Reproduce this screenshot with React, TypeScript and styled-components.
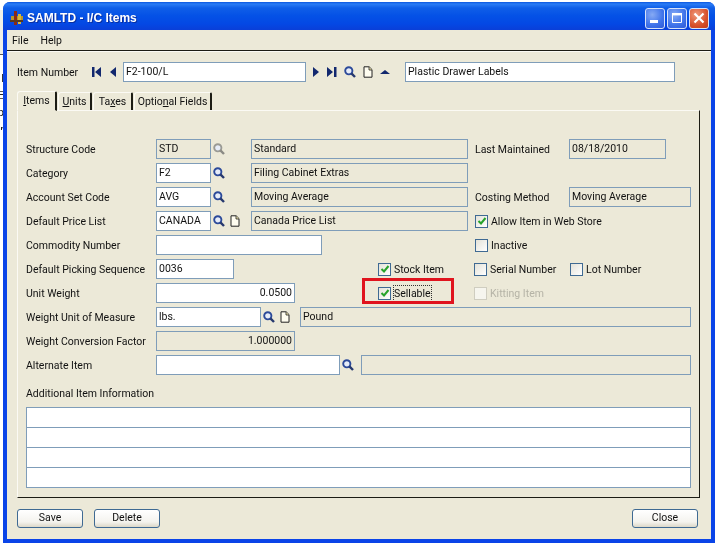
import React from "react";
import styled, { createGlobalStyle } from "styled-components";

const Global = createGlobalStyle`
  html, body { margin: 0; padding: 0; background: #fff; }
  body { width: 719px; height: 546px; overflow: hidden; font-family: Roboto, "Liberation Sans", Arial, sans-serif; font-size: 10.5px; color: #111; }
`;

const Desktop = styled.div`
  position: relative;
  width: 719px;
  height: 546px;
  overflow: hidden;
  filter: blur(0.35px);
`;

const Sliver = styled.div`
  position: absolute;
  left: 0;
  top: 10px;
  width: 3px;
  height: 120px;
  background: linear-gradient(#f0efe8 0 44px, #555 44px 45px, #fff 45px);
  overflow: hidden;
`;

const SliverText = styled.div`
  position: absolute;
  left: -5px;
  top: 60px;
  width: 9px;
  text-align: right;
  line-height: 17px;
  font-size: 11px;
  color: #222;
`;

const Window = styled.div`
  position: absolute;
  left: 3px;
  top: 2px;
  width: 712px;
  height: 541px;
  box-sizing: border-box;
  background: #0a44e8;
  border-radius: 7px 7px 0 0;
  padding: 0 4px 4px 4px;
  display: flex;
  flex-direction: column;
`;

const TitleBar = styled.div`
  height: 28px;
  box-sizing: border-box;
  margin: 0 -4px;
  padding: 4px 6px 0 7px;
  border-radius: 7px 7px 0 0;
  background: linear-gradient(#0a55e0 0, #2a7cf5 2px, #0f5ee8 6px, #0451e6 14px, #0448e4 22px, #0a3fd8 28px);
  display: flex;
  align-items: center;
  gap: 3px;
  color: #fff;
`;

const TitleText = styled.div`
  flex: 1;
  font-family: "Liberation Sans", Arial, sans-serif;
  font-size: 12px;
  font-weight: 700;
  text-shadow: 1px 1px 0 #0a2fa0;
`;

const CaptionGroup = styled.div`
  display: flex;
  gap: 2px;
`;

const CaptionButton = styled.div<{ $close?: boolean }>`
  width: 20px;
  height: 21px;
  box-sizing: border-box;
  border: 1px solid #d6e2fa;
  border-radius: 3px;
  background: ${(p) =>
    p.$close
      ? "radial-gradient(circle at 35% 30%, #f09a7c, #d8512c 60%, #c23a18)"
      : "radial-gradient(circle at 35% 30%, #86aaf4, #3f73ea 60%, #2f5ad6)"};
  display: flex;
  align-items: center;
  justify-content: center;
`;

const Body = styled.div`
  flex: 1;
  background: #ece9d8;
  display: flex;
  flex-direction: column;
`;

const MenuBar = styled.div`
  height: 20px;
  padding: 0 5px;
  display: flex;
  align-items: center;
  gap: 12px;
  border-bottom: 1px solid #1c1c14;
  box-shadow: 0 1px 0 #fbfaf4;
`;

const Content = styled.div`
  flex: 1;
  padding: 11px 11px 0 10px;
  display: flex;
  flex-direction: column;
`;

const HeaderRow = styled.div`
  height: 20px;
  display: flex;
  align-items: center;
`;

const HeaderLabel = styled.div`
  width: 75px;
  flex: none;
`;

const Field = styled.div<{ $w: number; $gray?: boolean; $right?: boolean; $ml?: number }>`
  width: ${(p) => p.$w}px;
  margin-left: ${(p) => p.$ml ?? 0}px;
  height: 20px;
  flex: none;
  box-sizing: border-box;
  border: 1px solid #7f9db9;
  padding: 0 2px;
  line-height: 18px;
  white-space: nowrap;
  overflow: hidden;
  background: ${(p) => (p.$gray ? "#ece9d8" : "#fff")};
  text-align: ${(p) => (p.$right ? "right" : "left")};
`;

const NavTray = styled.div<{ $w: number; $gap: number; $pad?: number }>`
  width: ${(p) => p.$w}px;
  flex: none;
  display: flex;
  align-items: center;
  gap: ${(p) => p.$gap}px;
  padding-left: ${(p) => p.$pad ?? 2}px;
  box-sizing: border-box;
`;

const TabStrip = styled.div`
  margin-top: 8px;
  height: 20px;
  display: flex;
  align-items: flex-end;
  gap: 1px;
  position: relative;
  z-index: 1;
`;

const Tab = styled.div<{ $w: number; $active?: boolean }>`
  width: ${(p) => p.$w}px;
  height: ${(p) => (p.$active ? 20 : 18)}px;
  box-sizing: border-box;
  text-align: center;
  white-space: nowrap;
  line-height: 17px;
  background: #ece9d8;
  border-top: 1px solid #fbfaf4;
  border-left: 1px solid #fbfaf4;
  border-right: 2px solid #1c1c14;
  border-radius: 3px 2px 0 0;
  border-bottom: ${(p) => (p.$active ? "1px solid #ece9d8" : "none")};
  margin-bottom: ${(p) => (p.$active ? -1 : 0)}px;
`;

const Panel = styled.div`
  height: 388px;
  width: 683px;
  box-sizing: border-box;
  border-top: 1px solid #fbfaf4;
  border-left: 1px solid #fbfaf4;
  border-right: 1px solid #1c1c14;
  border-bottom: 1px solid #1c1c14;
  padding: 28px 0 0 8px;
  display: flex;
  flex-direction: column;
  gap: 4px;
`;

const Row = styled.div`
  height: 20px;
  display: flex;
  align-items: center;
`;

const Label = styled.div<{ $w?: number; $ml?: number }>`
  width: ${(p) => p.$w ?? 130}px;
  margin-left: ${(p) => p.$ml ?? 0}px;
  flex: none;
  white-space: nowrap;
`;

const CheckWrap = styled.div<{ $w?: number; $ml?: number; $off?: boolean }>`
  width: ${(p) => (p.$w ? `${p.$w}px` : "auto")};
  margin-left: ${(p) => p.$ml ?? 0}px;
  flex: none;
  display: flex;
  align-items: center;
  gap: 3px;
  white-space: nowrap;
  position: relative;
  color: ${(p) => (p.$off ? "#b5b3a6" : "inherit")};
`;

const Box = styled.span<{ $off?: boolean }>`
  width: 13px;
  height: 13px;
  box-sizing: border-box;
  flex: none;
  border: 1.5px solid ${(p) => (p.$off ? "#cfcdc0" : "#3f6a93")};
  background: ${(p) => (p.$off ? "#f6f5ee" : "linear-gradient(135deg,#e4e2d8,#fff)")};
  display: inline-flex;
  align-items: center;
  justify-content: center;
`;

const FocusText = styled.span`
  outline: 1px dotted #333;
  outline-offset: 0;
  padding: 1px 0;
`;

const RedBox = styled.div`
  position: absolute;
  left: -16px;
  top: -8px;
  width: 92px;
  height: 26px;
  box-sizing: border-box;
  border: 3px solid #e0141e;
`;

const AdditionalLabel = styled.div`
  margin-top: 8px;
  height: 16px;
  line-height: 14px;
`;

const InfoTable = styled.div`
  width: 665px;
  height: 80px;
  margin-top: 1px;
  display: flex;
  flex-direction: column;
`;

const InfoRow = styled.div`
  flex: 1;
  box-sizing: border-box;
  background: #fff;
  border: 1px solid #7f9db9;
  margin-top: -1px;
`;

const Footer = styled.div`
  margin-top: 11px;
  display: flex;
  gap: 11px;
`;

const Btn = styled.div<{ $push?: boolean }>`
  width: 66px;
  height: 19px;
  box-sizing: border-box;
  margin-left: ${(p) => (p.$push ? "auto" : "0")};
  margin-right: ${(p) => (p.$push ? "2px" : "0")};
  border: 1.5px solid #3f6a93;
  border-radius: 3px;
  background: linear-gradient(#ffffff, #f4f3ee 70%, #dcd8c8);
  text-align: center;
  line-height: 16px;
`;

const Search = ({ gray }: { gray?: boolean }) => (
  <svg width="12" height="12" viewBox="0 0 12 12" style={{ flex: "none" }}>
    <circle cx="4.8" cy="4.8" r="3.6" fill="#e6ecf8" stroke={gray ? "#9a9a94" : "#2c4a9a"} strokeWidth="1.9" />
    <path d="M7.4 7.4 11 11" stroke={gray ? "#8a8a84" : "#26386e"} strokeWidth="2.4" />
  </svg>
);

const Doc = () => (
  <svg width="10" height="12" viewBox="0 0 10 12" style={{ flex: "none" }}>
    <path d="M1 .8h5.2L9 3.6v7.6H1z" fill="#fffdf0" stroke="#222" strokeWidth="1" />
    <path d="M6 1v3h3" fill="#f0e6a8" stroke="#222" strokeWidth=".8" />
  </svg>
);

const NavIcon = ({ d, w = 10 }: { d: string; w?: number }) => (
  <svg width={w} height="10" viewBox={`0 0 ${w} 10`} style={{ flex: "none" }}>
    <path d={d} fill="#12286e" />
  </svg>
);

const Tick = () => (
  <svg width="10" height="10" viewBox="0 0 10 10">
    <path d="M1.5 5 4 7.5 8.5 2" fill="none" stroke="#27a32a" strokeWidth="2" />
  </svg>
);

const AppIcon = () => (
  <svg width="14" height="18" viewBox="0 0 14 18" style={{ flex: "none" }}>
    <rect x="1" y="7" width="12" height="6" fill="#b8962a" />
    <rect x="4" y="2" width="3" height="14" fill="#8a2a18" />
    <rect x="8" y="5" width="3" height="10" fill="#d8b83a" />
    <rect x="0" y="11" width="13" height="2" fill="#5a3a20" />
  </svg>
);

const Check = ({ label, checked, off, focus, w, ml, children }: {
  label: string; checked?: boolean; off?: boolean; focus?: boolean; w?: number; ml?: number; children?: React.ReactNode;
}) => (
  <CheckWrap $w={w} $ml={ml} $off={off}>
    {children}
    <Box $off={off}>{checked && <Tick />}</Box>
    {focus ? <FocusText>{label}</FocusText> : <span>{label}</span>}
  </CheckWrap>
);

export default function App() {
  return (
    <Desktop>
      <Global />
      <Sliver>
        <SliverText>l<br />E<br />p<br />r</SliverText>
      </Sliver>
      <Window>
        <TitleBar>
          <AppIcon />
          <TitleText>SAMLTD - I/C Items</TitleText>
          <CaptionGroup>
            <CaptionButton>
              <svg width="14" height="14" viewBox="0 0 14 14"><rect x="2" y="9" width="8" height="3" fill="#fff" /></svg>
            </CaptionButton>
            <CaptionButton>
              <svg width="14" height="14" viewBox="0 0 14 14"><path d="M2.5 3.5h9v8h-9z" fill="none" stroke="#fff" /><rect x="2" y="2" width="10" height="2.4" fill="#fff" /></svg>
            </CaptionButton>
            <CaptionButton $close>
              <svg width="14" height="14" viewBox="0 0 14 14"><path d="M2.5 2.5l9 9M11.5 2.5l-9 9" stroke="#fff" strokeWidth="2.2" /></svg>
            </CaptionButton>
          </CaptionGroup>
        </TitleBar>
        <Body>
          <MenuBar><span>File</span><span>Help</span></MenuBar>
          <Content>
            <HeaderRow>
              <HeaderLabel>Item Number</HeaderLabel>
              <NavTray $w={31} $gap={8} $pad={0}>
                <NavIcon d="M0 0h2.5v10H0zM9 0v10L3 5z" />
                <NavIcon w={6} d="M6 0v10L0 5z" />
              </NavTray>
              <Field $w={183}>F2-100/L</Field>
              <NavTray $w={99} $gap={7} $pad={7}>
                <NavIcon w={7} d="M0 0v10l6-5z" />
                <NavIcon d="M0 0v10l6-5zM7 0h2.5v10H7z" />
                <Search />
                <Doc />
                <NavIcon d="M0 7 5 3l5 4z" />
              </NavTray>
              <Field $w={270}>Plastic Drawer Labels</Field>
            </HeaderRow>
            <TabStrip>
              <Tab $w={40} $active><u>I</u>tems</Tab>
              <Tab $w={34}><u>U</u>nits</Tab>
              <Tab $w={40}>Ta<u>x</u>es</Tab>
              <Tab $w={78}>Optio<u>n</u>al Fields</Tab>
            </TabStrip>
            <Panel>
              <Row>
                <Label>Structure Code</Label>
                <Field $w={55} $gray>STD</Field>
                <NavTray $w={40} $gap={0}><Search gray /></NavTray>
                <Field $w={217} $gray>Standard</Field>
                <Label $ml={7} $w={94}>Last Maintained</Label>
                <Field $w={97} $gray>08/18/2010</Field>
              </Row>
              <Row>
                <Label>Category</Label>
                <Field $w={55}>F2</Field>
                <NavTray $w={40} $gap={0}><Search /></NavTray>
                <Field $w={217} $gray>Filing Cabinet Extras</Field>
              </Row>
              <Row>
                <Label>Account Set Code</Label>
                <Field $w={55}>AVG</Field>
                <NavTray $w={40} $gap={0}><Search /></NavTray>
                <Field $w={217} $gray>Moving Average</Field>
                <Label $ml={7} $w={94}>Costing Method</Label>
                <Field $w={122} $gray>Moving Average</Field>
              </Row>
              <Row>
                <Label>Default Price List</Label>
                <Field $w={55}>CANADA</Field>
                <NavTray $w={40} $gap={5}><Search /><Doc /></NavTray>
                <Field $w={217} $gray>Canada Price List</Field>
                <Check label="Allow Item in Web Store" checked ml={7} />
              </Row>
              <Row>
                <Label>Commodity Number</Label>
                <Field $w={166} />
                <Check label="Inactive" ml={153} />
              </Row>
              <Row>
                <Label>Default Picking Sequence</Label>
                <Field $w={78}>0036</Field>
                <Check label="Stock Item" checked ml={144} w={96} />
                <Check label="Serial Number" w={96} />
                <Check label="Lot Number" />
              </Row>
              <Row>
                <Label>Unit Weight</Label>
                <Field $w={139} $right>0.0500</Field>
                <Check label="Sellable" checked focus ml={83} w={96}><RedBox /></Check>
                <Check label="Kitting Item" off />
              </Row>
              <Row>
                <Label>Weight Unit of Measure</Label>
                <Field $w={105}>lbs.</Field>
                <NavTray $w={39} $gap={5}><Search /><Doc /></NavTray>
                <Field $w={391} $gray>Pound</Field>
              </Row>
              <Row>
                <Label>Weight Conversion Factor</Label>
                <Field $w={139} $gray $right>1.000000</Field>
              </Row>
              <Row>
                <Label>Alternate Item</Label>
                <Field $w={184} />
                <NavTray $w={21} $gap={0}><Search /></NavTray>
                <Field $w={330} $gray />
              </Row>
              <AdditionalLabel>Additional Item Information</AdditionalLabel>
              <InfoTable>
                <InfoRow /><InfoRow /><InfoRow /><InfoRow />
              </InfoTable>
            </Panel>
            <Footer>
              <Btn>Save</Btn>
              <Btn>Delete</Btn>
              <Btn $push>Close</Btn>
            </Footer>
          </Content>
        </Body>
      </Window>
    </Desktop>
  );
}
